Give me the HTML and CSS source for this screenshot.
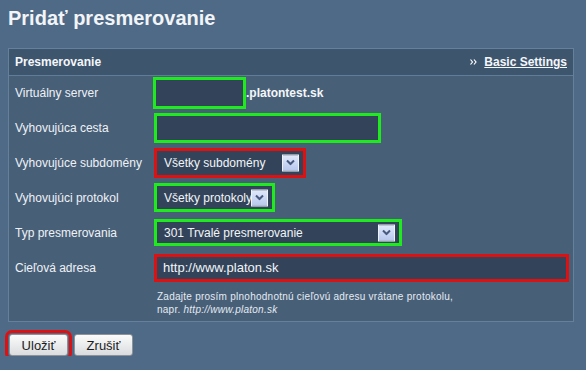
FILE: index.html
```html
<!DOCTYPE html>
<html lang="sk">
<head>
  <meta charset="UTF-8" />
  <title>Pridať presmerovanie</title>
  <link rel="stylesheet" href="styles.css">
</head>
<body>
  <h1 class="page-title">Pridať presmerovanie</h1>

  <div class="panel">
    <div class="panel-head">
      <span>Presmerovanie</span>
      <a class="basic-link" href="#">
        <svg class="basic-icon" width="7" height="6" viewBox="0 0 7 6">
          <polyline points="0.5,0.5 2.5,3 0.5,5.5" fill="none" stroke="#fff" stroke-width="1.2"/>
          <polyline points="4,0.5 6,3 4,5.5" fill="none" stroke="#fff" stroke-width="1.2"/>
        </svg>
        Basic Settings
      </a>
    </div>

    <div class="panel-body">
      <div class="row row-first">
        <label class="row-label">Virtuálny server</label>
        <div class="field">
          <input class="text-input ok w-server" type="text" />
          <span class="domain">.platontest.sk</span>
        </div>
      </div>

      <div class="row">
        <label class="row-label">Vyhovujúca cesta</label>
        <input class="text-input ok w-path" type="text" />
      </div>

      <div class="row">
        <label class="row-label">Vyhovujúce subdomény</label>
        <div class="select error w-sub">
          <span>Všetky subdomény</span>
          <span class="select-arrow"><svg width="9" height="6" viewBox="0 0 9 6"><polyline points="1,1 4.5,4.5 8,1" fill="none" stroke="#46597f" stroke-width="2"/></svg></span>
        </div>
      </div>

      <div class="row">
        <label class="row-label">Vyhovujúci protokol</label>
        <div class="select ok w-proto">
          <span>Všetky protokoly</span>
          <span class="select-arrow"><svg width="9" height="6" viewBox="0 0 9 6"><polyline points="1,1 4.5,4.5 8,1" fill="none" stroke="#46597f" stroke-width="2"/></svg></span>
        </div>
      </div>

      <div class="row">
        <label class="row-label">Typ presmerovania</label>
        <div class="select ok w-type">
          <span>301 Trvalé presmerovanie</span>
          <span class="select-arrow"><svg width="9" height="6" viewBox="0 0 9 6"><polyline points="1,1 4.5,4.5 8,1" fill="none" stroke="#46597f" stroke-width="2"/></svg></span>
        </div>
      </div>

      <div class="row">
        <label class="row-label">Cieľová adresa</label>
        <input class="text-input error w-target" type="text" value="http://www.platon.sk" />
      </div>

      <p class="help">
        Zadajte prosím plnohodnotnú cieľovú adresu vrátane protokolu,<br>
        napr. <em>http://www.platon.sk</em>
      </p>
    </div>
  </div>

  <div class="actions">
    <button class="btn btn-error" type="submit">Uložiť</button>
    <button class="btn" type="button">Zrušiť</button>
  </div>
</body>
</html>
```

FILE: styles.css
```css
* {
  box-sizing: border-box;
  margin: 0;
  padding: 0;
}
body {
  font-family: "Liberation Sans", Arial, sans-serif;
  font-size: 12px;
  background: #4f6a86;
  color: #eef2f6;
  padding: 0 12px 0 8px;
}
.page-title {
  font-size: 20px;
  line-height: 23px;
  padding-top: 7px;
  margin-bottom: 18px;
  color: #f2f5f8;
}
.panel {
  border: 1px solid #64809c;
  background: #485f78;
}
.panel-head {
  display: flex;
  justify-content: space-between;
  align-items: center;
  height: 27px;
  padding: 0 6px;
  background: #3e556e;
  border-bottom: 1px solid #617c98;
  font-weight: bold;
  color: #f4f7fa;
}
.basic-link {
  display: flex;
  align-items: center;
  gap: 7px;
  color: #f4f7fa;
  text-decoration: underline;
}
.panel-body {
  padding: 0 4px 0 6px;
}
.row {
  display: flex;
  align-items: center;
  height: 35px;
}
.row-first {
  height: 34px;
}
.row-label {
  width: 139px;
  flex: none;
}
.field {
  display: flex;
  align-items: center;
}
.domain {
  font-weight: bold;
  color: #f4f7fa;
}
.text-input {
  height: 30px;
  border-width: 3px;
  border-style: solid;
  background: #33445a;
  color: #f2f5f8;
  font-family: inherit;
  font-size: 13px;
  padding-left: 6px;
  outline: none;
}
.select {
  position: relative;
  display: flex;
  align-items: center;
  border-width: 3px;
  border-style: solid;
  background: #33445a;
  color: #f2f5f8;
  padding-left: 7px;
  white-space: nowrap;
  overflow: hidden;
}
.ok {
  border-color: #1eea1e;
}
.error {
  border-color: #dd1111;
}
.w-server {
  width: 93px;
  height: 32px;
  margin-left: -1px;
}
.w-path {
  width: 227px;
}
.w-target {
  width: 415px;
  height: 28px;
}
.w-sub {
  width: 152px;
  height: 30px;
}
.w-proto {
  width: 121px;
  height: 29px;
}
.w-type {
  width: 248px;
  height: 27px;
}
.select-arrow {
  position: absolute;
  right: 4px;
  top: 50%;
  transform: translateY(-50%);
  width: 17px;
  height: 17px;
  display: flex;
  align-items: center;
  justify-content: center;
  border: 1px solid #eef2fb;
  background: linear-gradient(#e0e9fb, #b7c7ed);
}
.help {
  padding: 5px 0 5px 142px;
  font-size: 10px;
  line-height: 13px;
  letter-spacing: 0.25px;
  color: #e4ebf2;
}
.actions {
  display: flex;
  gap: 6px;
  margin-top: 12px;
  padding-left: 1px;
}
.btn {
  width: 59px;
  height: 22px;
  font-family: inherit;
  font-size: 13px;
  color: #1c1c1c;
  background: linear-gradient(#fbfbfb, #dadcde);
  border: 1px solid #8d9398;
  border-radius: 3px;
}
.btn-error {
  outline: 3px solid #dd1111;
  outline-offset: 1px;
}
```
